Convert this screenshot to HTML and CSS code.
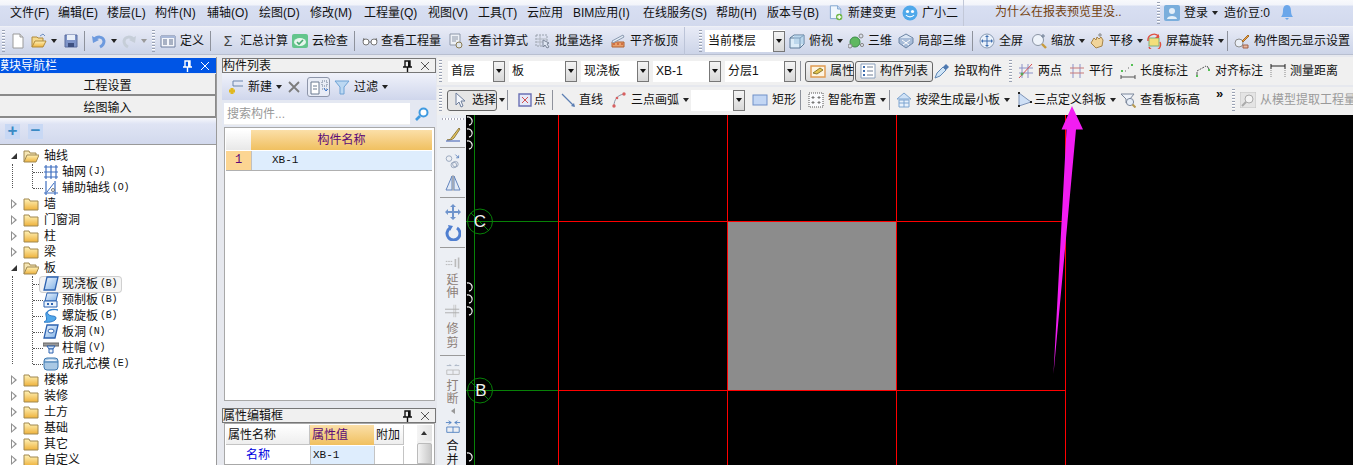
FILE: index.html
```html
<!DOCTYPE html>
<html lang="zh">
<head>
<meta charset="utf-8">
<title>GTJ</title>
<link rel="stylesheet" href="styles.css">
</head>
<body>
<svg class="defs" width="0" height="0">
<defs>
<linearGradient id="gy" x1="0" y1="0" x2="0" y2="1"><stop offset="0" stop-color="#fff2b8"/><stop offset="1" stop-color="#eeb23c"/></linearGradient>
<linearGradient id="gb" x1="0" y1="0" x2="1" y2="1"><stop offset="0" stop-color="#eef5fd"/><stop offset="1" stop-color="#7fb0e6"/></linearGradient>
<symbol id="new" viewBox="0 0 16 16"><path d="M3 1h7l3 3v11H3z" fill="#fff" stroke="#9a9a9a"/><path d="M10 1v3h3" fill="#ddd" stroke="#9a9a9a"/></symbol>
<symbol id="open" viewBox="0 0 16 16"><path d="M1 14V4h5l1 1h5v3" fill="#f4d98e" stroke="#b08a3a"/><path d="M1 14l3-6h11l-3 6z" fill="url(#gy)" stroke="#b08a3a"/><path d="M9 3l3-2 2 2" fill="none" stroke="#6f8fc0"/></symbol>
<symbol id="save" viewBox="0 0 16 16"><path d="M2 2h12v12H2z" fill="#7d93c8" stroke="#5a6c9e"/><path d="M4 2h8v5H4z" fill="#e8eef8"/><path d="M5 10h6v4H5z" fill="#3d4f80"/></symbol>
<symbol id="undo" viewBox="0 0 16 16"><path d="M3 7c3-4 9-4 10 1 0 3-2 5-4 6" fill="none" stroke="#6d9ade" stroke-width="3"/><path d="M1 3l1 7 6-3z" fill="#6d9ade"/></symbol>
<symbol id="redo" viewBox="0 0 16 16"><path d="M13 7c-3-4-9-4-10 1 0 3 2 5 4 6" fill="none" stroke="#c6ced8" stroke-width="3"/><path d="M15 3l-1 7-6-3z" fill="#c6ced8"/></symbol>
<symbol id="def" viewBox="0 0 16 16"><path d="M1 3h14v11H1z" fill="#f4f6fb" stroke="#6f7f9f"/><path d="M1 3h14v2H1z" fill="#a8b8d8"/><path d="M3 7h4M9 7h4M3 9h4M9 9h4M3 11h4M9 11h4" stroke="#5c6c8c"/></symbol>
<symbol id="cloud" viewBox="0 0 16 16"><rect x="0" y="1" width="16" height="14" rx="2" fill="#63c58c"/><ellipse cx="8" cy="9" rx="6" ry="4" fill="#e6f6ec"/><path d="M5 9l2 2 4-4" fill="none" stroke="#4aa873" stroke-width="1.6"/></symbol>
<symbol id="glass" viewBox="0 0 16 16"><circle cx="4" cy="9" r="3" fill="#fff" stroke="#777"/><circle cx="12" cy="9" r="3" fill="#fff" stroke="#777"/><path d="M7 9h2M1 8l1-3M15 8l-1-3" stroke="#777"/></symbol>
<symbol id="calc" viewBox="0 0 16 16"><path d="M2 1h10v11H2z" fill="#eef1f6" stroke="#8d97a8"/><path d="M4 4h6M4 6h6M4 8h4" stroke="#8d97a8"/><circle cx="11" cy="12" r="3" fill="#dfe7ef" stroke="#8a7a50"/></symbol>
<symbol id="batch" viewBox="0 0 16 16"><path d="M1 2h11v11H1z" fill="none" stroke="#98a0ac" stroke-dasharray="2 1"/><path d="M1 6h11M1 9h11M5 2v11" stroke="#b0b6c0"/><path d="M8 7l6 3-2 1 2 3-2 1-2-3-2 2z" fill="#dfe6f2" stroke="#7c8698"/></symbol>
<symbol id="align" viewBox="0 0 16 16"><path d="M2 14V9h12v5z" fill="#e9a06a" stroke="#b06030"/><path d="M2 8l11-6 1 2-11 6z" fill="#e4ecf6" stroke="#8a9ab0"/><path d="M3 11h2M7 11h2M11 11h2" stroke="#b84020"/></symbol>
<symbol id="cube" viewBox="0 0 16 16"><path d="M1 5l4-3h10v9l-4 4H1z" fill="#dcecf8" stroke="#5c7a98"/><path d="M1 5h10v10M11 5l4-3" fill="none" stroke="#5c7a98"/><path d="M5 2h10v9H5z" fill="#9cc2e0" opacity=".5"/></symbol>
<symbol id="ball" viewBox="0 0 16 16"><circle cx="7" cy="9" r="5" fill="#5fb860" stroke="#3c8c48"/><circle cx="13" cy="3" r="2" fill="#d8dee8" stroke="#888"/><circle cx="2" cy="13" r="2" fill="#d8dee8" stroke="#888"/><circle cx="14" cy="12" r="1.6" fill="#d8dee8" stroke="#888"/></symbol>
<symbol id="local" viewBox="0 0 16 16"><path d="M8 1l7 4-7 4-7-4z" fill="#dbe6f4" stroke="#6c84a4"/><path d="M1 5v5l7 5 7-5V5" fill="#a8bcd8" stroke="#6c84a4"/><path d="M4 7l7 5M12 7l-7 5" stroke="#fff"/></symbol>
<symbol id="full" viewBox="0 0 16 16"><circle cx="8" cy="8" r="7" fill="#eaf1fa" stroke="#8a9cb4"/><path d="M8 3v10M3 8h10" stroke="#3f6fb0"/><path d="M8 2l2 2H6zM8 14l2-2H6zM2 8l2-2v4zM14 8l-2-2v4z" fill="#3f6fb0"/></symbol>
<symbol id="zoom" viewBox="0 0 16 16"><circle cx="7" cy="7" r="5.5" fill="#eef3fa" stroke="#8a94a4"/><path d="M11 11l4 4" stroke="#c89a3c" stroke-width="2.4"/><path d="M12 1v4M10 3h4" stroke="#6f7f94"/></symbol>
<symbol id="hand" viewBox="0 0 16 16"><path d="M2 10l3-5 2 2 1-3 2 2 2-2 2 3-1 6-6 2z" fill="#f1d49a" stroke="#a6844a"/><path d="M11 0v4M9 2h4" stroke="#888"/></symbol>
<symbol id="rot" viewBox="0 0 16 16"><rect x="3" y="5" width="10" height="8" fill="#f4de7a" stroke="#7fb07c"/><path d="M2 8a6 6 0 0 1 11-4M14 9a6 6 0 0 1-11 5" fill="none" stroke="#e05040" stroke-width="1.4"/><path d="M13 1v4h-4z" fill="#e05040"/></symbol>
<symbol id="disp" viewBox="0 0 16 16"><circle cx="5" cy="10" r="4" fill="#eaeff6" stroke="#8d8d8d"/><path d="M8 8l6-6 1 1-6 6z" fill="#e9a14a" stroke="#a76e28"/><path d="M9 12h5v3H9z" fill="#e8b8a0" stroke="#a06048"/></symbol>
<symbol id="doc" viewBox="0 0 18 20"><path d="M2 1h9l4 4v12H2z" fill="#eff6fd" stroke="#6e98c6"/><path d="M11 1v4h4" fill="#cde0f4" stroke="#6e98c6"/><circle cx="13" cy="15" r="4" fill="#70b84a"/><path d="M13 12.500v5M10.500 15h5" stroke="#fff" stroke-width="1.600"/></symbol>
<symbol id="smile" viewBox="0 0 16 16"><circle cx="8" cy="8" r="7.500" fill="#4fa8ea"/><circle cx="5.500" cy="6.500" r="1.600" fill="#fff"/><circle cx="10.500" cy="6.500" r="1.600" fill="#fff"/><path d="M4 10c2 2.500 6 2.500 8 0" fill="none" stroke="#fff" stroke-width="1.200"/></symbol>
<symbol id="user" viewBox="0 0 16 16"><rect width="16" height="16" rx="2" fill="#7aaedc"/><circle cx="8" cy="6" r="3" fill="#e4eff9"/><path d="M3 14c0-4 10-4 10 0z" fill="#e4eff9"/></symbol>
<symbol id="bell" viewBox="0 0 14 16"><path d="M7 0c3 0 4 3 4 6s1 5 2 6H1c1-1 2-3 2-6s1-6 4-6z" fill="#6aa6ea"/><path d="M5 13h4l-2 2z" fill="#6aa6ea"/></symbol>
<symbol id="attr" viewBox="0 0 16 16"><path d="M1 3h14v11H1z" fill="#fdf4e0" stroke="#e09a50" stroke-width="1.400"/><path d="M3 10l7-5 3 2-6 4z" fill="#e3c44e" stroke="#8a7a30"/></symbol>
<symbol id="list" viewBox="0 0 16 16"><path d="M1 1h14v14H1z" fill="#fff" stroke="#8aa0bc"/><path d="M3 4h2M3 8h2M3 12h2" stroke="#3f6fb0" stroke-width="2"/><path d="M7 4h6M7 8h6M7 12h6" stroke="#6f7f94"/></symbol>
<symbol id="pick" viewBox="0 0 16 16"><path d="M1 15l2-5 6-6 3 3-6 6z" fill="#cfe4f6" stroke="#5e86b4"/><path d="M9 4l3-3 3 3-3 3z" fill="#4e79b0"/></symbol>
<symbol id="two" viewBox="0 0 16 16"><path d="M4 1v14M10 1v14M1 5h14M1 10h14" stroke="#8c92c8"/><path d="M1 15L14 1" stroke="#d85050"/><circle cx="4" cy="11" r="1.500" fill="#58a858"/></symbol>
<symbol id="para" viewBox="0 0 16 16"><path d="M4 1v14M11 1v14" stroke="#8c92c8"/><path d="M1 5h14M1 10h14" stroke="#c87878"/></symbol>
<symbol id="dim" viewBox="0 0 16 16"><path d="M1 14h14M1 12v4M15 12v4" stroke="#555"/><rect x="11" y="1" width="2" height="2" fill="#56c056"/><rect x="1" y="7" width="2" height="2" fill="#56c056"/><path d="M5 8h1M8 5h1" stroke="#666"/></symbol>
<symbol id="adim" viewBox="0 0 16 16"><path d="M2 8l9-5" stroke="#555" stroke-dasharray="2 1"/><rect x="1" y="12" width="2" height="2" fill="#56c056"/><rect x="13" y="6" width="2" height="2" fill="#56c056"/><path d="M2 9v3M12 3l2 3" stroke="#555"/></symbol>
<symbol id="meas" viewBox="0 0 16 16"><path d="M1 1v5M15 1v5M1 3h14" stroke="#222"/><path d="M1 7v8M15 7v8" stroke="#888" stroke-dasharray="1 1"/></symbol>
<symbol id="cur" viewBox="0 0 16 16"><path d="M4 1v12l3-3 2 5 2-1-2-5h4z" fill="#f4f7fc" stroke="#6f7f9c"/></symbol>
<symbol id="pt" viewBox="0 0 16 16"><path d="M2 2h12v12H2z" fill="#e4e8f8" stroke="#6a70b4" stroke-width="1.400"/><path d="M5 5l6 6M11 5l-6 6" stroke="#d05050"/></symbol>
<symbol id="line" viewBox="0 0 16 16"><path d="M1 2l12 12" stroke="#5c7fb4" stroke-width="1.200"/><path d="M14 15l-4-1 3-3z" fill="#5c7fb4"/></symbol>
<symbol id="arc" viewBox="0 0 16 16"><path d="M3 14C3 7 7 3 13 2" fill="none" stroke="#8a94a4"/><circle cx="3" cy="14" r="1.700" fill="#d86060"/><circle cx="13" cy="2" r="1.700" fill="#d86060"/><circle cx="6" cy="6" r="1.300" fill="#d86060"/></symbol>
<symbol id="rect" viewBox="0 0 16 16"><rect x="1" y="3" width="14" height="10" fill="#c2d6f4" stroke="#6f8fc8"/></symbol>
<symbol id="smart" viewBox="0 0 16 16"><path d="M1 1h14v14H1z" fill="#fafbfe" stroke="#555" stroke-dasharray="1 1"/><path d="M5 4v3M3.500 5.500h3M11 4v3M9.500 5.500h3M5 9v3M3.500 10.500h3M11 9v3M9.500 10.500h3" stroke="#777"/></symbol>
<symbol id="beam" viewBox="0 0 16 16"><path d="M1 7l7-6 7 6z" fill="#cfe2f6" stroke="#7ca4d0"/><path d="M3 8h10v7H3z" fill="#e8f1fb" stroke="#7ca4d0"/><path d="M8 8v7M3 11h10" stroke="#7ca4d0"/></symbol>
<symbol id="slope" viewBox="0 0 16 16"><path d="M2 1v13l12-4z" fill="#cfe0f6" stroke="#7e94b8"/><rect x="1" y="0" width="2" height="2" fill="#222"/><rect x="1" y="13" width="2" height="2" fill="#222"/><rect x="13" y="9" width="2" height="2" fill="#222"/></symbol>
<symbol id="elev" viewBox="0 0 16 16"><path d="M1 2h13l-4 5v4H6V7z" fill="#eef2f8" stroke="#7a869a"/><circle cx="10" cy="10" r="3.600" fill="#e6eef8" stroke="#7a869a"/><path d="M12.500 12.500l3 3" stroke="#b89a50" stroke-width="2"/></symbol>
<symbol id="gmag" viewBox="0 0 16 16"><rect width="16" height="16" fill="#e4e4e4" stroke="#c4c4c4"/><circle cx="9" cy="7" r="4" fill="#f4f4f4" stroke="#aaa"/><path d="M6 10l-4 4" stroke="#aaa" stroke-width="2"/></symbol>
<symbol id="nw" viewBox="0 0 16 16"><path d="M5 2h10M5 7h10M5 2v5" stroke="#6a85ad" fill="none"/><path d="M1 12h6M4 9v6" stroke="#e0b820" stroke-width="3"/></symbol>
<symbol id="x" viewBox="0 0 12 12"><path d="M1 1l10 10M11 1L1 11" stroke="#7c7c7c" stroke-width="1.800"/></symbol>
<symbol id="ndoc" viewBox="0 0 20 16"><path d="M2 3h8v12H2z" fill="#fff" stroke="#6a7a90"/><path d="M4 7h4M4 10h4" stroke="#6a7a90"/><path d="M13 2h5v5h-5zM13 10h5" fill="none" stroke="#6a7a90" stroke-dasharray="1 1"/><path d="M15 9l2 3 2-2" fill="none" stroke="#3d78d0"/></symbol>
<symbol id="filter" viewBox="0 0 16 16"><path d="M1 2h14L10 8v7H6V8z" fill="#bcd8f2" stroke="#6ea2d4"/></symbol>
<symbol id="find" viewBox="0 0 14 14"><circle cx="8.500" cy="5.500" r="4" fill="#fff" stroke="#3f9ae0" stroke-width="2"/><path d="M5 9l-4 4" stroke="#3f9ae0" stroke-width="2.600"/></symbol>
<symbol id="pin" viewBox="0 0 10 12"><path d="M3 1h5v6H3zM1 7h9M5.500 7v5" fill="none" stroke="currentColor" stroke-width="1.400"/><path d="M6 1h2v6H6z" fill="currentColor"/></symbol>
<symbol id="cl" viewBox="0 0 10 10"><path d="M1 1l8 8M9 1L1 9" stroke="currentColor"/></symbol>
<symbol id="fc" viewBox="0 0 16 14"><path d="M1 13V2h5l1 2h8v9z" fill="url(#gy)" stroke="#a08850"/></symbol>
<symbol id="fo" viewBox="0 0 16 14"><path d="M1 13V2h5l1 2h6v2" fill="#f6e6b4" stroke="#a08850"/><path d="M1 13l3-7h12l-3 7z" fill="url(#gy)" stroke="#a08850"/></symbol>
<symbol id="net" viewBox="0 0 16 16"><path d="M1 3h14M1 8h14M1 13h14M3 1v14M8 1v14M13 1v14" stroke="#3f6fc0" stroke-width="1.200"/></symbol>
<symbol id="aux" viewBox="0 0 16 16"><path d="M1 13h14M3 1v14M12 1v14" stroke="#3f6fc0" stroke-width="1.200"/><path d="M4 12l7-9" stroke="#3f6fc0"/><circle cx="10" cy="10" r="1.500" fill="none" stroke="#777"/></symbol>
<symbol id="slab" viewBox="0 0 16 16"><path d="M4 1h11l-3 13H1z" fill="url(#gb)" stroke="#2d62b0" stroke-width="1.300"/></symbol>
<symbol id="pre" viewBox="0 0 16 16"><path d="M4 1h11l-2 8H2z" fill="url(#gb)" stroke="#2d62b0"/><path d="M1 9h13v6H1z" fill="#eaf2fb" stroke="#2d62b0"/><path d="M4 11h2v2H4zM8 11h2v2H8z" fill="#2d62b0"/></symbol>
<symbol id="spi" viewBox="0 0 16 16"><path d="M15 2C8 0 3 3 5 6s8 1 8 4-6 5-12 4C6 12 2 8 3 5s8-4 12-3z" fill="#52a8ea" stroke="#2d7ac8"/></symbol>
<symbol id="hole" viewBox="0 0 16 16"><path d="M4 1h11l-3 13H1z" fill="url(#gb)" stroke="#2d62b0" stroke-width="1.300"/><ellipse cx="8" cy="7" rx="3" ry="2" fill="#fff" stroke="#2d62b0"/></symbol>
<symbol id="capi" viewBox="0 0 16 16"><path d="M0 3h16v3H0z" fill="#9a9a9a" stroke="#666"/><path d="M4 6h8l-2 3H6z" fill="#cfe0f4" stroke="#2d62b0"/><path d="M6 9h4v4H6z" fill="#eaf2fb" stroke="#2d62b0"/></symbol>
<symbol id="core" viewBox="0 0 16 16"><rect x="1" y="2" width="14" height="12" rx="3" fill="#a9c8e4" stroke="#3f78b0"/><path d="M1 6h14" stroke="#3f78b0"/><path d="M2 5c2-2 10-2 12 0" fill="#eaf2fb"/></symbol>
<symbol id="brush" viewBox="0 0 16 16"><path d="M2 14c3 0 4-1 5-3l7-9 1 1-6 9c-2 2-4 2-7 2z" fill="#e8c85a" stroke="#8d7a44"/><path d="M1 15h14" stroke="#6c84c4" stroke-width="1.400"/></symbol>
<symbol id="off" viewBox="0 0 20 18"><circle cx="5" cy="6" r="3.500" fill="none" stroke="#8a9ab4"/><circle cx="13" cy="13" r="3.500" fill="none" stroke="#8a9ab4"/><circle cx="11" cy="14" r="3.500" fill="none" stroke="#8a9ab4"/><path d="M13 1l4 4M17 2v3h-3" fill="none" stroke="#4f78b8"/></symbol>
<symbol id="mirror" viewBox="0 0 16 16"><path d="M7 1v14H1zM9 1v14h6z" fill="#e2eaf6" stroke="#6284bc"/><path d="M8 0v16" stroke="#999"/></symbol>
<symbol id="move" viewBox="0 0 16 16"><path d="M8 0l3 3H9v4h4V5l3 3-3 3V9H9v4h2l-3 3-3-3h2V9H3v2L0 8l3-3v2h4V3H5z" fill="#6f94cc"/></symbol>
<symbol id="spin" viewBox="0 0 16 16"><path d="M5 3a6.500 6.500 0 1 0 7 0" fill="none" stroke="#4f7fd0" stroke-width="3"/><path d="M3 0l5 1-3 5z" fill="#4f7fd0"/></symbol>
<symbol id="ext" viewBox="0 0 20 16"><path d="M17 1v14M13 3v10" stroke="#bbb" stroke-width="2"/><path d="M1 6h9M1 10h9" stroke="#aaa" stroke-dasharray="2 1"/></symbol>
<symbol id="trim" viewBox="0 0 18 14"><path d="M10 0v14M12 0v14" stroke="#c4c4c4"/><path d="M0 5h16M0 9h16" stroke="#aaa"/></symbol>
<symbol id="brk" viewBox="0 0 18 12"><path d="M2 1h5M11 1h5" stroke="#aab4c4"/><path d="M7 1l-2-1M11 1l2-1" stroke="#aab4c4"/><path d="M2 6h14v5H2zM9 6v5" fill="none" stroke="#bbb"/></symbol>
<symbol id="mrg" viewBox="0 0 18 14"><path d="M1 2h6M17 2h-6M7 2L4 0M7 2L4 4M11 2l3-2M11 2l3 2" stroke="#4f7fc0" fill="none"/><path d="M2 7h14v6H2zM9 7v6" fill="none" stroke="#4f7fc0"/></symbol>
</defs>
</svg>

<div class="app">
  <div class="menu">
    <span>文件(F)</span><span>编辑(E)</span><span>楼层(L)</span><span>构件(N)</span><span>辅轴(O)</span><span>绘图(D)</span><span>修改(M)</span><span>工程量(Q)</span><span>视图(V)</span><span>工具(T)</span><span>云应用</span><span>BIM应用(I)</span><span>在线服务(S)</span><span>帮助(H)</span><span>版本号(B)</span>
    <span class="item"><svg class="ic"><use href="#doc"/></svg>新建变更</span>
    <span class="item"><svg class="ic"><use href="#smile"/></svg>广小二</span>
    <span class="ask">为什么在报表预览里没..</span>
    <i class="grip"></i>
    <span class="item"><svg class="ic"><use href="#user"/></svg>登录<b class="car"></b></span>
    <span>造价豆:0</span>
    <svg class="ic"><use href="#bell"/></svg>
  </div>

  <div class="tb1">
    <i class="grip"></i>
    <svg class="ic"><use href="#new"/></svg>
    <span class="item"><svg class="ic"><use href="#open"/></svg><b class="car"></b></span>
    <svg class="ic"><use href="#save"/></svg>
    <i class="sep"></i>
    <span class="item"><svg class="ic"><use href="#undo"/></svg><b class="car"></b></span>
    <span class="item"><svg class="ic"><use href="#redo"/></svg><b class="car off"></b></span>
    <i class="grip"></i>
    <span class="item"><svg class="ic"><use href="#def"/></svg>定义</span>
    <i class="sep"></i>
    <span class="item"><span class="sigma">Σ</span>汇总计算</span>
    <span class="item"><svg class="ic"><use href="#cloud"/></svg>云检查</span>
    <i class="sep"></i>
    <span class="item snug3"><svg class="ic"><use href="#glass"/></svg>查看工程量</span>
    <span class="item"><svg class="ic"><use href="#calc"/></svg>查看计算式</span>
    <span class="item"><svg class="ic"><use href="#batch"/></svg>批量选择</span>
    <span class="item"><svg class="ic"><use href="#align"/></svg>平齐板顶</span>
    <i class="sep wide"></i>
    <i class="grip"></i>
    <span class="combo">当前楼层<b class="drop"></b></span>
    <span class="item"><svg class="ic"><use href="#cube"/></svg>俯视<b class="car"></b></span>
    <span class="item"><svg class="ic"><use href="#ball"/></svg>三维</span>
    <span class="item"><svg class="ic"><use href="#local"/></svg>局部三维</span>
    <i class="sep"></i>
    <span class="item"><svg class="ic"><use href="#full"/></svg>全屏</span>
    <span class="item"><svg class="ic"><use href="#zoom"/></svg>缩放<b class="car"></b></span>
    <span class="item"><svg class="ic"><use href="#hand"/></svg>平移<b class="car"></b></span>
    <span class="item"><svg class="ic"><use href="#rot"/></svg>屏幕旋转<b class="car"></b></span>
    <i class="sep"></i>
    <span class="item"><svg class="ic"><use href="#disp"/></svg>构件图元显示设置</span>
  </div>

  <div class="main">
    <section class="left">
      <header class="title active"><span class="title-text">模块导航栏</span><svg class="pin"><use href="#pin"/></svg><svg class="cl"><use href="#cl"/></svg></header>
      <div class="navbtn first">工程设置</div>
      <div class="navbtn">绘图输入</div>
      <div class="treebar"><span class="pm">+</span><span class="pm">−</span></div>
      <div class="tree">
        <div class="node"><b class="tw open"></b><svg class="fd"><use href="#fo"/></svg>轴线</div>
        <div class="kids"><div class="inner">
          <div class="leaf"><span class="lab"><svg class="ic"><use href="#net"/></svg>轴网<em>(J)</em></span></div>
          <div class="leaf"><span class="lab"><svg class="ic"><use href="#aux"/></svg>辅助轴线<em>(O)</em></span></div>
        </div></div>
        <div class="node"><b class="tw"></b><svg class="fd"><use href="#fc"/></svg>墙</div>
        <div class="node"><b class="tw"></b><svg class="fd"><use href="#fc"/></svg>门窗洞</div>
        <div class="node"><b class="tw"></b><svg class="fd"><use href="#fc"/></svg>柱</div>
        <div class="node"><b class="tw"></b><svg class="fd"><use href="#fc"/></svg>梁</div>
        <div class="node"><b class="tw open"></b><svg class="fd"><use href="#fo"/></svg>板</div>
        <div class="kids"><div class="inner">
          <div class="leaf"><span class="lab sel"><svg class="ic"><use href="#slab"/></svg>现浇板<em>(B)</em></span></div>
          <div class="leaf"><span class="lab"><svg class="ic"><use href="#pre"/></svg>预制板<em>(B)</em></span></div>
          <div class="leaf"><span class="lab"><svg class="ic"><use href="#spi"/></svg>螺旋板<em>(B)</em></span></div>
          <div class="leaf"><span class="lab"><svg class="ic"><use href="#hole"/></svg>板洞<em>(N)</em></span></div>
          <div class="leaf"><span class="lab"><svg class="ic"><use href="#capi"/></svg>柱帽<em>(V)</em></span></div>
          <div class="leaf"><span class="lab"><svg class="ic"><use href="#core"/></svg>成孔芯模<em>(E)</em></span></div>
        </div></div>
        <div class="node"><b class="tw"></b><svg class="fd"><use href="#fc"/></svg>楼梯</div>
        <div class="node"><b class="tw"></b><svg class="fd"><use href="#fc"/></svg>装修</div>
        <div class="node"><b class="tw"></b><svg class="fd"><use href="#fc"/></svg>土方</div>
        <div class="node"><b class="tw"></b><svg class="fd"><use href="#fc"/></svg>基础</div>
        <div class="node"><b class="tw"></b><svg class="fd"><use href="#fc"/></svg>其它</div>
        <div class="node"><b class="tw"></b><svg class="fd"><use href="#fc"/></svg>自定义</div>
      </div>
    </section>

    <section class="mid">
      <header class="title"><span class="title-text">构件列表</span><svg class="pin"><use href="#pin"/></svg><svg class="cl"><use href="#cl"/></svg></header>
      <div class="midbar">
        <span class="item"><svg class="ic"><use href="#nw"/></svg>新建<b class="car"></b></span>
        <svg class="xic"><use href="#x"/></svg>
        <span class="docbtn"><svg class="ndoc"><use href="#ndoc"/></svg></span>
        <span class="item"><svg class="ic"><use href="#filter"/></svg>过滤<b class="car"></b></span>
      </div>
      <div class="search"><span class="sinput">搜索构件...</span><svg class="find"><use href="#find"/></svg></div>
      <div class="frame listframe">
        <div class="ltable">
          <span class="corner"></span><span class="hd">构件名称</span>
          <span class="num">1</span><span class="val indent">XB-1</span>
        </div>
      </div>
      <header class="title second"><span class="title-text">属性编辑框</span><svg class="pin"><use href="#pin"/></svg><svg class="cl"><use href="#cl"/></svg></header>
      <div class="frame propframe">
        <div class="ptable">
          <span class="ph">属性名称</span><span class="hd lefty">属性值</span><span class="ph">附加</span><span class="blank"></span>
          <div class="scroll"><span class="sup"></span><span class="sthumb"></span></div>
          <span class="pname">名称</span><span class="val">XB-1</span><span class="pcell"></span><span class="blank"></span>
        </div>
      </div>
    </section>

    <section class="right">
      <div class="row row1">
        <i class="grip"></i>
        <span class="combo">首层<b class="drop"></b></span>
        <span class="combo">板<b class="drop"></b></span>
        <span class="combo">现浇板<b class="drop"></b></span>
        <span class="combo">XB-1<b class="drop"></b></span>
        <span class="combo">分层1<b class="drop"></b></span>
        <i class="sep"></i>
        <span class="toggle"><svg class="ic"><use href="#attr"/></svg>属性</span>
        <span class="toggle"><svg class="ic"><use href="#list"/></svg>构件列表</span>
        <span class="item"><svg class="ic"><use href="#pick"/></svg>拾取构件</span>
        <i class="grip"></i>
        <span class="item"><svg class="ic"><use href="#two"/></svg>两点</span>
        <span class="item"><svg class="ic"><use href="#para"/></svg>平行</span>
        <span class="item"><svg class="ic"><use href="#dim"/></svg>长度标注</span>
        <span class="item"><svg class="ic"><use href="#adim"/></svg>对齐标注</span>
        <span class="item"><svg class="ic"><use href="#meas"/></svg>测量距离</span>
      </div>
      <div class="row row2">
        <i class="grip"></i>
        <span class="item"><span class="toggle pick"><svg class="ic"><use href="#cur"/></svg>选择</span><b class="car tight"></b></span>
        <i class="sep"></i>
        <span class="item snug1"><svg class="ic"><use href="#pt"/></svg>点</span>
        <i class="sep"></i>
        <span class="item snug2"><svg class="ic"><use href="#line"/></svg>直线</span>
        <span class="item"><svg class="ic"><use href="#arc"/></svg>三点画弧<b class="car"></b></span>
        <span class="combo short"><b class="drop"></b></span>
        <span class="item"><svg class="ic"><use href="#rect"/></svg>矩形</span>
        <i class="sep"></i>
        <span class="item"><svg class="ic"><use href="#smart"/></svg>智能布置<b class="car"></b></span>
        <i class="sep"></i>
        <span class="item"><svg class="ic"><use href="#beam"/></svg>按梁生成最小板<b class="car"></b></span>
        <span class="item snug1"><svg class="ic"><use href="#slope"/></svg>三点定义斜板<b class="car gapped"></b></span>
        <span class="item"><svg class="ic"><use href="#elev"/></svg>查看板标高</span>
        <span class="more">»</span>
        <i class="grip"></i>
        <span class="item gone"><svg class="ic"><use href="#gmag"/></svg>从模型提取工程量</span>
      </div>
      <div class="work">
        <div class="vtb">
          <i class="grip h"></i>
          <svg class="ic"><use href="#brush"/></svg>
          <i class="hsep"></i>
          <svg class="ic"><use href="#off"/></svg>
          <svg class="ic"><use href="#mirror"/></svg>
          <i class="hsep"></i>
          <svg class="ic"><use href="#move"/></svg>
          <svg class="ic"><use href="#spin"/></svg>
          <i class="hsep"></i>
          <svg class="ic"><use href="#ext"/></svg>
          <span class="dim">延</span><span class="dim">伸</span>
          <svg class="ic"><use href="#trim"/></svg>
          <span class="dim">修</span><span class="dim">剪</span>
          <i class="hsep"></i>
          <svg class="ic"><use href="#brk"/></svg>
          <span class="dim">打</span><span class="dim">断</span>
          <b class="lt"></b>
          <svg class="ic"><use href="#mrg"/></svg>
          <span>合</span><span>并</span>
        </div>
        <svg class="canvas" viewBox="466 115 887 350" width="887" height="350">
          <rect x="466" y="115" width="887" height="350" fill="#000"/>
          <g fill="none" stroke="#e8e8e8" stroke-width="1.300">
            <path d="M467 117a3.500 3.500 0 0 1 2 8M467 129a3.500 3.500 0 0 1 2 8M467 141a3.500 3.500 0 0 1 2 8"/>
            <path d="M467 283a3.500 3.500 0 0 1 2 8M467 295a3.500 3.500 0 0 1 2 8M467 307a3.500 3.500 0 0 1 2 8"/>
            <path d="M467 453a3.500 3.500 0 0 1 2 8"/>
          </g>
          <rect x="728" y="222" width="168" height="168" fill="#8c8c8c"/>
          <g stroke="#078107" fill="none" stroke-width="1">
            <path d="M474.500 115v350M466 221.500h92M466 390.500h92"/>
            <circle cx="480" cy="221.500" r="12.500"/>
            <circle cx="480" cy="390.500" r="12.500"/>
            <path d="M471 213l18 18M471 382l18 18"/>
          </g>
          <g stroke="#ff0000" stroke-width="1" fill="none">
            <path d="M558.500 115v350M727.500 115v350M896.500 115v350M1065.500 115v350"/>
            <path d="M558 221.500h508M558 390.500h508"/>
          </g>
          <text class="axis" x="480" y="227">C</text>
          <text class="axis" x="481" y="396">B</text>
        </svg>
      </div>
    </section>
  </div>

  <svg class="arrow" viewBox="0 0 40 275" width="40" height="275"><path d="M22 2L33 25.500H26L3.500 270 16.500 25.500H11.500z" fill="#f21df2"/></svg>
</div>
</body>
</html>
```

FILE: styles.css
```css
* { box-sizing: border-box; }
html, body { margin: 0; padding: 0; }
body {
  width: 1353px;
  height: 465px;
  overflow: hidden;
  background: #e6e8ee;
  color: #111;
  font: 12px/14px "Liberation Sans", "Noto Sans CJK SC", sans-serif;
}
.defs { position: absolute; }
.app { position: relative; width: 1353px; height: 465px; display: flex; flex-direction: column; overflow: hidden; }
i, b, em { font-style: normal; font-weight: normal; }
svg { display: block; flex: none; }
.ic { width: 16px; height: 16px; }
.item { display: flex; align-items: center; gap: 4px; white-space: nowrap; }
.snug1 { gap: 1px; }
.snug2 { gap: 2px; }
.snug3 { gap: 3px; }
.car { flex: none; width: 0; height: 0; border-style: solid; border-width: 4px 3.5px 0; border-color: #222 transparent transparent; }
.car.off { border-top-color: #999; }
.car.gapped { margin-left: 3px; }
.grip {
  display: block;
  width: 3px;
  height: 22px;
  margin-left: 2px;
  background: repeating-linear-gradient(to bottom, #9aa2b4 0 1px, #fff 1px 2px, transparent 2px 3px);
}
.grip.h { width: 22px; height: 2px; margin: 0; background: repeating-linear-gradient(to right, #aab 0 1px, #fff 1px 3px); }
.sep { display: block; width: 1px; height: 20px; background: #8e929c; }
.sep.wide { background: #bcc4d8; height: 28px; }

.menu {
  height: 27px;
  flex: none;
  display: grid;
  grid-template-columns: 48px 49px 48px 52px 52px 51px 54px 64px 50px 49px 46px 70px 73px 51px 61px 74px 61px 192px 9px 60px 55px 16px 1fr;
  align-items: center;
  padding: 0 0 3px 10px;
  white-space: nowrap;
  background: linear-gradient(#f8f9fc 0, #f2f4fa 5px, #d8dff2 6px, #d2d9ed 27px);
  border-bottom: 1px solid #eef0f6;
}
.ask { color: #74420f; padding-left: 31px; height: 26px; line-height: 25px; border-left: 1px solid #c2c8d8; }

.tb1 {
  height: 28px;
  flex: none;
  display: grid;
  grid-template-columns: 10px 21px 32px 21px 7px 30px 29px 10px 50px 10px 72px 62px 8px 86px 87px 75px 74px 13px 8px 84px 59px 50px 74px 7px 52px 58px 57px 81px 7px 1fr;
  align-items: center;
  background: linear-gradient(#e8ebf6, #ccd4e8);
  border-bottom: 1px solid #b8bfd0;
}
.sigma { width: 16px; text-align: center; font-size: 14px; color: #444; }

.main { flex: 1; min-height: 0; display: flex; padding-top: 2px; }

.title {
  display: flex;
  align-items: center;
  height: 15px;
  flex: none;
  overflow: hidden;
  white-space: nowrap;
  color: #111;
  background: #f0f0f0;
  border: 1px solid #777;
  padding-right: 5px;
}
.title.active { background: #0055e5; color: #fff; border-color: #0055e5; }
.title-text { flex: 1; letter-spacing: 0; }
.active .title-text { margin-left: -4px; }
.pin { width: 10px; height: 12px; margin-right: 8px; }
.cl { width: 10px; height: 10px; color: #555; }
.active .cl { color: #fff; }

.left { width: 217px; flex: none; padding-top: 1px; display: flex; flex-direction: column; border-right: 1px solid #9a9a9a; }
.navbtn {
  height: 22px;
  flex: none;
  line-height: 24px;
  text-align: center;
  background: #f0f0f0;
  border-bottom: 2px solid #8a8a8a;
  border-right: 1px solid #8a8a8a;
}
.navbtn.first { margin-top: 1px; }
.treebar {
  height: 27px;
  flex: none;
  display: flex;
  gap: 8px;
  padding: 6px 0 0 5px;
  background: linear-gradient(#f6f7fc 0, #dfe4f4 6px, #d2d9ed 100%);
  border-bottom: 1px solid #999;
}
.pm {
  width: 15px;
  height: 15px;
  background: #c8d8f4;
  color: #3a8ac4;
  font: bold 17px/14px "Liberation Sans", sans-serif;
  text-align: center;
}
.tree { flex: 1; min-height: 0; overflow: hidden; background: #fff; padding-top: 3px; font-size: 12px; }
.node { display: flex; align-items: center; height: 16px; padding-left: 11px; white-space: nowrap; }
.tw { position: relative; flex: none; width: 0; height: 0; border-style: solid; border-width: 5px 0 5px 6px; border-color: transparent transparent transparent #8f8f8f; margin-right: 6px; }
.tw::after { content: ""; position: absolute; left: -5px; top: -3px; border-style: solid; border-width: 3px 0 3px 3.5px; border-color: transparent transparent transparent #fff; }
.tw.open { border-width: 0 0 6px 6px; border-color: transparent transparent #333; }
.tw.open::after { display: none; }
.fd { width: 16px; height: 14px; margin-right: 5px; }
.kids { margin-left: 12px; border-left: 1px dotted #555; }
.inner { display: flex; flex-direction: column; margin-left: 19px; margin-bottom: 8px; border-left: 1px dotted #555; }
.leaf { display: flex; align-items: center; height: 16px; white-space: nowrap; }
.leaf:last-child { margin-bottom: -8px; }
.leaf::before { content: ""; width: 10px; flex: none; border-top: 1px dotted #555; }
.lab { display: flex; align-items: center; gap: 3px; height: 15px; }
.lab em { font-family: "Liberation Mono", monospace; font-size: 10px; letter-spacing: -.3px; margin-left: -1px; }
.sel { background: #f4f4f4; box-shadow: 0 0 0 1px #d0d0d0; border-radius: 3px; margin-left: -3px; padding: 0 4px 0 3px; }

.mid { width: 214px; margin-left: 5px; flex: none; padding-top: 1px; display: flex; flex-direction: column; }
.midbar {
  height: 27px;
  flex: none;
  display: grid;
  grid-template-columns: 60px 19px 27px 1fr;
  align-items: center;
  padding-left: 6px;
  background: linear-gradient(#f0f2fa, #cfd6ec);
}
.xic { width: 12px; height: 12px; }
.docbtn { width: 23px; height: 20px; display: flex; align-items: center; justify-content: center; background: #e8ecf6; border: 1px solid #8e96aa; border-radius: 3px; }
.ndoc { width: 20px; height: 16px; }
.search { height: 27px; flex: none; display: flex; align-items: center; padding: 0 7px 0 2px; justify-content: space-between; background: #e4e8f2; }
.sinput { width: 186px; height: 22px; line-height: 22px; padding-left: 3px; background: #fff; color: #999; border-bottom: 1px solid #eee; }
.find { width: 14px; height: 14px; }
.frame { margin: 0 1px 0 2px; background: #fff; border: 1px solid #a8a8a8; }
.listframe { height: 274px; flex: none; padding: 2px 2px 0 1px; }
.ltable { display: grid; grid-template-columns: 25px 1fr; grid-template-rows: 20px 19px; gap: 1px 0; border-bottom: 1px solid #b0b0b0; }
.corner { background: linear-gradient(#fff, #e8e8e8); }
.hd { display: block; text-align: center; line-height: 20px; color: #5b0a78; background: linear-gradient(#fbdfa8, #f0c060); }
.hd.lefty { text-align: left; padding-left: 2px; }
.num { text-align: center; line-height: 19px; color: #5b0a78; background: #fcd592; font-family: "Liberation Mono", monospace; }
.val { display: block; line-height: 18px; background: #deedfd; padding-left: 2px; font: 11px/18px "Liberation Mono", monospace; border-left: 1px solid #c0c0c0; }
.val.indent { padding-left: 20px; line-height: 19px; }
.second { margin-top: 7px; }
.propframe { flex: 1; min-height: 0; padding: 1px 1px 0; overflow: hidden; }
.ptable { display: grid; grid-template-columns: 84px 64px 30px 13px 15px; grid-template-rows: 20px 18px; gap: 1px 0; }
.ph { line-height: 20px; padding-left: 2px; background: linear-gradient(#fff, #eee); border-right: 1px solid #c4c4c4; border-bottom: 1px solid #c4c4c4; }
.blank { background: #fff; }
.pname { color: #0000e0; text-align: center; line-height: 18px; padding-right: 20px; }
.pcell { border-left: 1px solid #c4c4c4; border-right: 1px solid #c4c4c4; }
.scroll { grid-column: 5; grid-row: 1 / span 2; background: #f0f0f0; display: flex; flex-direction: column; gap: 2px; }
.sup { height: 16px; flex: none; background: linear-gradient(to right, #f4f4f4, #e4e4e4); position: relative; }
.sup::after { content: ""; position: absolute; left: 4px; top: 6px; border-style: solid; border-width: 0 3.5px 4px; border-color: transparent transparent #333; }
.sthumb { flex: 1; background: linear-gradient(to right, #f4f4f4, #c8c8c8); border: 1px solid #bbb; border-radius: 2px 2px 0 0; }

.right { flex: 1; min-width: 0; margin-left: 1px; display: flex; flex-direction: column; }
.row { height: 28px; flex: none; display: grid; align-items: center; background: #f0f0f0; white-space: nowrap; overflow: hidden; }
.row1 { grid-template-columns: 11px 61px 72px 72px 72px 75px 5px 50px 79px 73px 11px 51px 51px 75px 75px 68px; margin-bottom: 2px; }
.row2 { grid-template-columns: 10px 60px 10px 35px 9px 50px 80px 61px 48px 8px 81px 7px 121px 103px 96px 14px 10px 1fr; padding-bottom: 2px; }
.combo { display: flex; align-items: center; justify-content: space-between; height: 21px; margin-right: 4px; padding-left: 3px; background: #fff; white-space: nowrap; }
.combo.short { margin-right: 7px; justify-content: flex-end; }
.drop { flex: none; width: 12px; height: 21px; background: linear-gradient(#f4f4f4, #d8d8d8); border: 1px solid #777; position: relative; }
.drop::after { content: ""; position: absolute; left: 1.5px; top: 7px; border-style: solid; border-width: 4px 3.5px 0; border-color: #111 transparent transparent; }
.tb1 .combo { margin-right: 4px; height: 22px; }
.toggle { display: flex; align-items: center; gap: 4px; height: 21px; margin-right: 1px; padding-left: 4px; background: linear-gradient(#f4f4f4, #dcdcdc); border: 1px solid #666; border-radius: 3px; }
.pick { width: 50px; margin: 0; background: #e6e6e6; }
.tight { margin-left: -2px; }
.more { font: bold 13px/10px "Liberation Sans", sans-serif; align-self: start; padding-top: 2px; }
.gone { color: #9a9a9a; }

.work { flex: 1; min-height: 0; display: flex; }
.vtb {
  width: 29px;
  flex: none;
  display: grid;
  grid-template-rows: 7px 23px 4px 23px 21px 8px 21px 21px 8px 23px 13px 12px 24px 13px 14px 10px 19px 14px 13px 9px 24px 14px 14px;
  justify-items: center;
  align-items: center;
  padding-left: 2px;
  background: #eceff4;
  line-height: 13px;
}
.hsep { display: block; width: 25px; height: 1px; background: #9a9a9a; }
.dim { color: #8d8078; }
.lt { width: 0; height: 0; border-style: solid; border-width: 3px 4px 3px 0; border-color: transparent #999 transparent transparent; }
.canvas { flex: none; }
.axis { fill: #f0f0f0; font: 17px "Liberation Sans", sans-serif; text-anchor: middle; }

.arrow { position: absolute; left: 1050px; top: 104px; }
```
